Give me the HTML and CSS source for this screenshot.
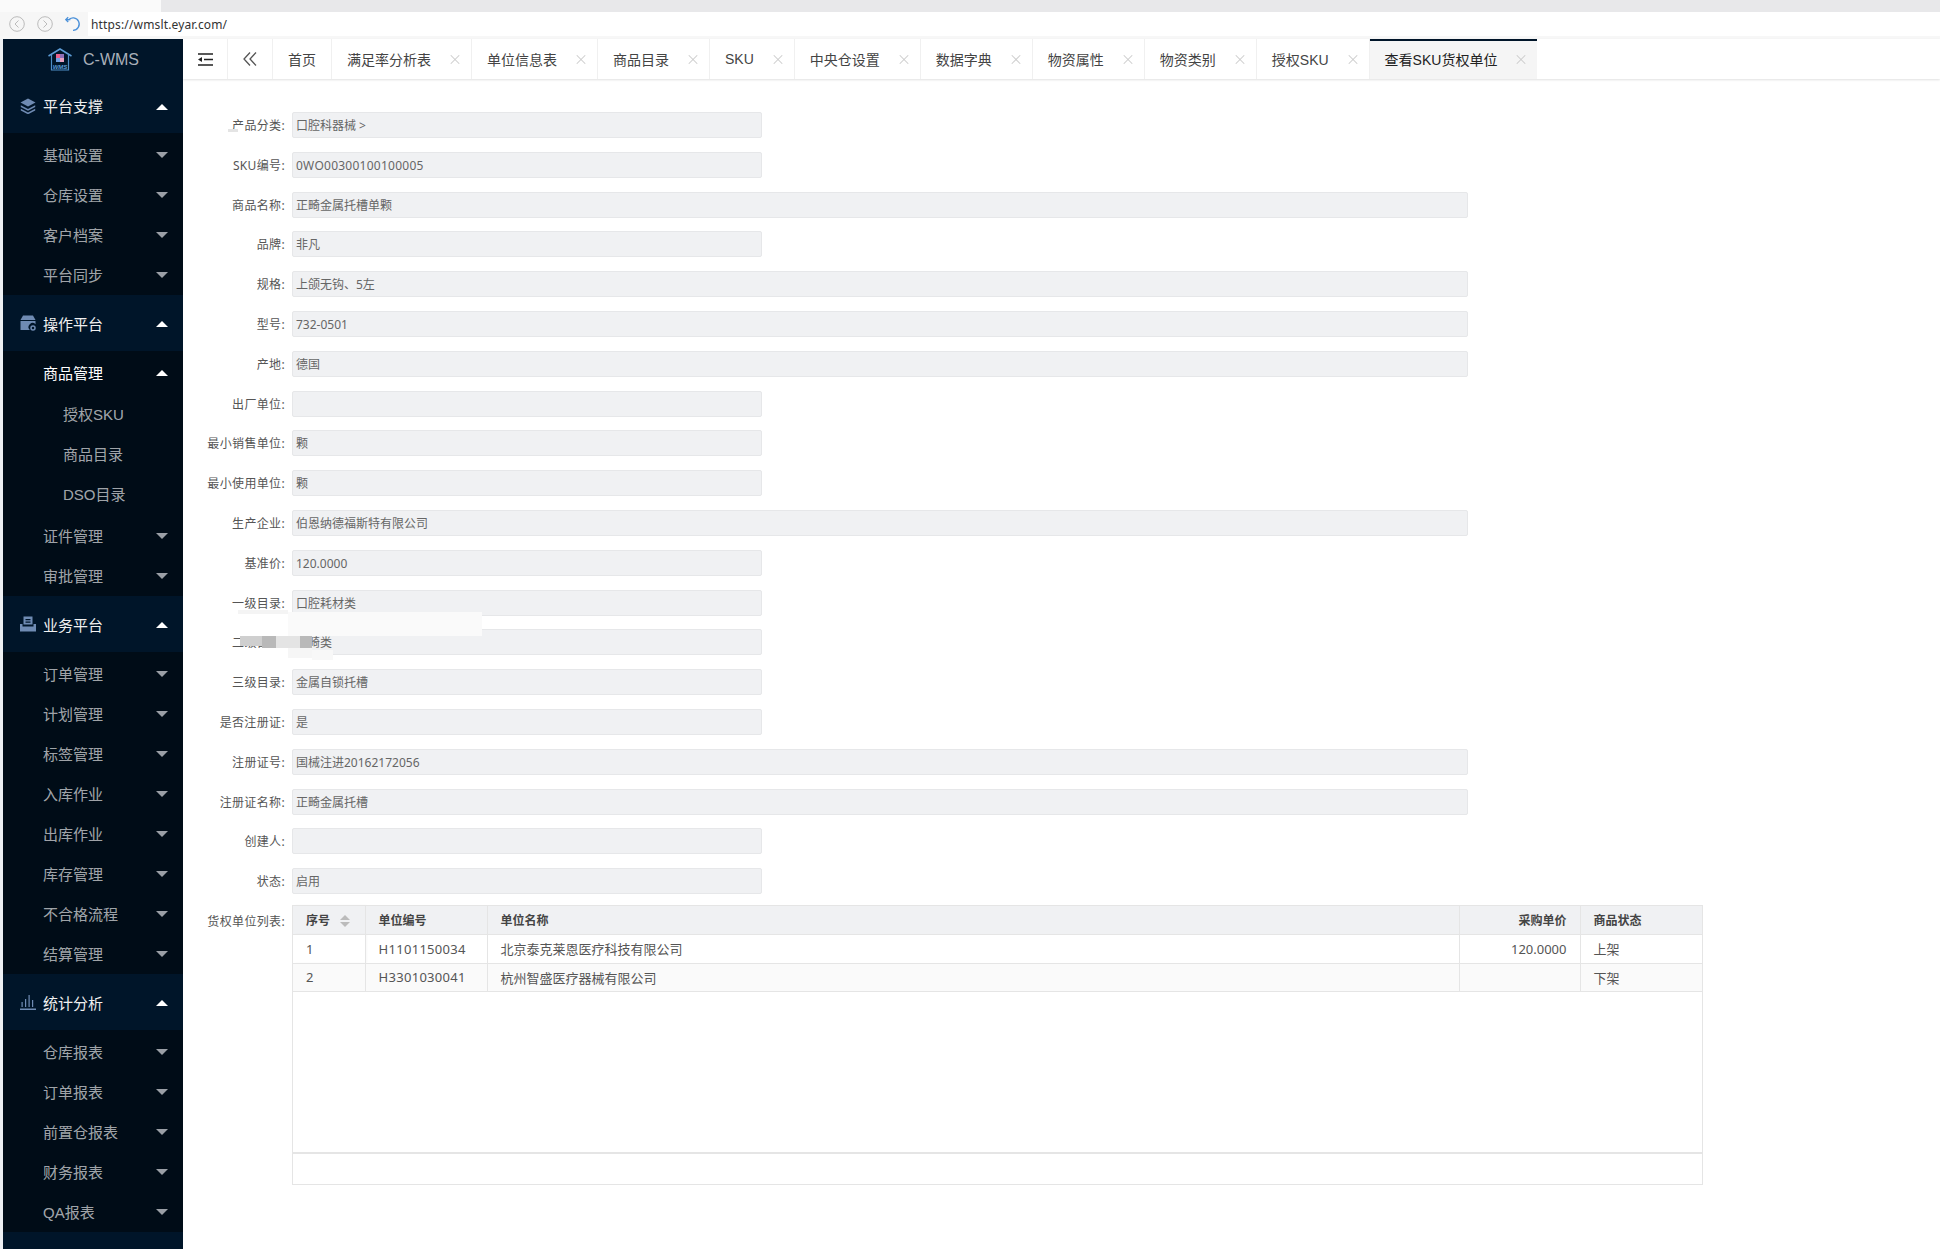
FILE: index.html
```html
<!DOCTYPE html>
<html lang="zh-CN">
<head>
    <meta charset="UTF-8">
    <meta name="viewport" content="width=device-width, initial-scale=1.0">
    <title>C-WMS</title>
    <link rel="stylesheet" href="styles.css">
</head>
<body>
    <!-- Browser chrome -->
    <div class="browser-tabs"><div class="browser-tab"></div></div>
    <div class="address-bar">
        <div class="nav-buttons">
            <svg class="nav-icon" viewBox="0 0 16 16"><circle cx="8" cy="8" r="7.3"/><path d="M9.5 4.5 6 8l3.500 3.500"/></svg>
            <svg class="nav-icon" viewBox="0 0 16 16"><circle cx="8" cy="8" r="7.300"/><path d="M6.500 4.500 10 8l-3.500 3.500"/></svg>
            <svg class="reload-icon" viewBox="0 0 16 16"><path d="M3.200 4.200A6.200 6.200 0 1 1 8 14.300"/><path d="M.8 3.600h4.600M3.200 1.200.8 3.600l2.400 2.400"/></svg>
        </div>
        <div class="url">https://wmslt.eyar.com/</div>
    </div>

    <div class="app">
        <!-- Sidebar -->
        <aside class="sidebar">
            <div class="logo">
                <svg class="logo-icon" viewBox="0 0 24 23">
                    <path class="logo-roof" d="M.5 8 12 1l11.500 7"/>
                    <path class="logo-wall" d="M3.500 7v15h17V7"/>
                    <rect x="8" y="6" width="4" height="4" fill="#e8628f"/>
                    <rect x="12" y="6" width="4" height="4" fill="#8f6fb8"/>
                    <rect x="8" y="10" width="4" height="4" fill="#6f9fe0"/>
                    <rect x="12" y="10" width="4" height="4" fill="#e8a0c0"/>
                    <text x="12" y="21" class="logo-text">WMS</text>
                </svg>
                <span>C-WMS</span>
            </div>

            <div class="group-title first">
                <svg class="group-icon" viewBox="0 0 16 16"><path d="M8 .5 15.500 4.500 8 8.500.5 4.500z"/><path d="M.8 7.200 8 11l7.200-3.800v1.800L8 12.800.8 9z"/><path d="M.8 10.700 8 14.500l7.200-3.800v1.800L8 16.300.8 12.500z"/></svg>
                <span>平台支撑</span><i class="arrow up"></i>
            </div>
            <ul class="submenu">
                <li class="menu-item"><span>基础设置</span><i class="arrow"></i></li>
                <li class="menu-item"><span>仓库设置</span><i class="arrow"></i></li>
                <li class="menu-item"><span>客户档案</span><i class="arrow"></i></li>
                <li class="menu-item"><span>平台同步</span><i class="arrow"></i></li>
            </ul>

            <div class="group-title">
                <svg class="group-icon" viewBox="0 0 16 16"><path d="M3 .5h10l2.500 4.500H.5z"/><path d="M.5 6h15v3.200A4 4 0 0 0 9.800 15H.5z"/><circle cx="13" cy="13" r="2" fill="none" stroke="#6f8bb3" stroke-width="1.500"/></svg>
                <span>操作平台</span><i class="arrow up"></i>
            </div>
            <ul class="submenu">
                <li class="menu-item open"><span>商品管理</span><i class="arrow up"></i></li>
                <li class="child-list">
                    <div class="child-item">授权SKU</div>
                    <div class="child-item">商品目录</div>
                    <div class="child-item">DSO目录</div>
                </li>
                <li class="menu-item"><span>证件管理</span><i class="arrow"></i></li>
                <li class="menu-item"><span>审批管理</span><i class="arrow"></i></li>
            </ul>

            <div class="group-title">
                <svg class="group-icon" viewBox="0 0 16 16"><path d="M3.500.5h9v8h-9zM5.500 3v1.200h5V3zm0 2.500v1.200h5V5.500z" fill-rule="evenodd"/><path d="M0 8h2.500v2.500h11V8H16v7.500H0z"/></svg>
                <span>业务平台</span><i class="arrow up"></i>
            </div>
            <ul class="submenu">
                <li class="menu-item"><span>订单管理</span><i class="arrow"></i></li>
                <li class="menu-item"><span>计划管理</span><i class="arrow"></i></li>
                <li class="menu-item"><span>标签管理</span><i class="arrow"></i></li>
                <li class="menu-item"><span>入库作业</span><i class="arrow"></i></li>
                <li class="menu-item"><span>出库作业</span><i class="arrow"></i></li>
                <li class="menu-item"><span>库存管理</span><i class="arrow"></i></li>
                <li class="menu-item"><span>不合格流程</span><i class="arrow"></i></li>
                <li class="menu-item"><span>结算管理</span><i class="arrow"></i></li>
            </ul>

            <div class="group-title">
                <svg class="group-icon" viewBox="0 0 16 16"><path d="M0 14.500h16V16H0zM1.500 8h1.200v5H1.500zM5 5h1.200v8H5zM8.500 1h1.200v12H8.500zM12 6h1.200v7H12z"/></svg>
                <span>统计分析</span><i class="arrow up"></i>
            </div>
            <ul class="submenu">
                <li class="menu-item"><span>仓库报表</span><i class="arrow"></i></li>
                <li class="menu-item"><span>订单报表</span><i class="arrow"></i></li>
                <li class="menu-item"><span>前置仓报表</span><i class="arrow"></i></li>
                <li class="menu-item"><span>财务报表</span><i class="arrow"></i></li>
                <li class="menu-item"><span>QA报表</span><i class="arrow"></i></li>
            </ul>
        </aside>

        <main class="main">
            <!-- Tab bar -->
            <nav class="tabbar">
                <div class="tool-btn toggle">
                    <svg viewBox="0 0 15 13"><path d="M0 1h15M6 6.500h9M0 12h15" stroke="#222" stroke-width="1.600" fill="none"/><path d="M0 6.500 4 4v5z" fill="#222"/></svg>
                </div>
                <div class="tool-btn collapse">
                    <svg viewBox="0 0 14 14"><path d="M7 .5 1 7l6 6.500M13 .5 7 7l6 6.500" stroke="#555" stroke-width="1.300" fill="none"/></svg>
                </div>
                <div class="tab home">首页</div>
                <div class="tab">满足率分析表<i class="tab-close"></i></div>
                <div class="tab">单位信息表<i class="tab-close"></i></div>
                <div class="tab">商品目录<i class="tab-close"></i></div>
                <div class="tab">SKU<i class="tab-close"></i></div>
                <div class="tab">中央仓设置<i class="tab-close"></i></div>
                <div class="tab">数据字典<i class="tab-close"></i></div>
                <div class="tab">物资属性<i class="tab-close"></i></div>
                <div class="tab">物资类别<i class="tab-close"></i></div>
                <div class="tab">授权SKU<i class="tab-close"></i></div>
                <div class="tab active">查看SKU货权单位<i class="tab-close"></i></div>
            </nav>

            <!-- Form -->
            <section class="content">
                <div class="form-row"><label>产品分类:</label><div class="field">口腔科器械 &gt;</div></div>
                <div class="form-row"><label>SKU编号:</label><div class="field num">0WO00300100100005</div></div>
                <div class="form-row"><label>商品名称:</label><div class="field wide">正畸金属托槽单颗</div></div>
                <div class="form-row"><label>品牌:</label><div class="field">非凡</div></div>
                <div class="form-row"><label>规格:</label><div class="field wide">上颌无钩、5左</div></div>
                <div class="form-row"><label>型号:</label><div class="field wide">732-0501</div></div>
                <div class="form-row"><label>产地:</label><div class="field wide">德国</div></div>
                <div class="form-row"><label>出厂单位:</label><div class="field"></div></div>
                <div class="form-row"><label>最小销售单位:</label><div class="field">颗</div></div>
                <div class="form-row"><label>最小使用单位:</label><div class="field">颗</div></div>
                <div class="form-row"><label>生产企业:</label><div class="field wide">伯恩纳德福斯特有限公司</div></div>
                <div class="form-row"><label>基准价:</label><div class="field">120.0000</div></div>
                <div class="form-row"><label>一级目录:</label><div class="field">口腔耗材类</div></div>
                <div class="form-row"><label>二级目录:</label><div class="field">正畸类</div></div>
                <div class="form-row"><label>三级目录:</label><div class="field">金属自锁托槽</div></div>
                <div class="form-row"><label>是否注册证:</label><div class="field">是</div></div>
                <div class="form-row"><label>注册证号:</label><div class="field wide">国械注进20162172056</div></div>
                <div class="form-row"><label>注册证名称:</label><div class="field wide">正畸金属托槽</div></div>
                <div class="form-row"><label>创建人:</label><div class="field"></div></div>
                <div class="form-row"><label>状态:</label><div class="field">启用</div></div>

                <div class="table-row">
                    <label>货权单位列表:</label>
                    <div class="data-grid">
                        <table class="units">
                            <colgroup>
                                <col class="col-no"><col class="col-code"><col><col class="col-price"><col class="col-status">
                            </colgroup>
                            <thead>
                                <tr>
                                    <th class="first-col">序号<i class="sort"></i></th>
                                    <th>单位编号</th>
                                    <th>单位名称</th>
                                    <th class="right">采购单价</th>
                                    <th>商品状态</th>
                                </tr>
                            </thead>
                            <tbody>
                                <tr>
                                    <td class="first-col">1</td>
                                    <td class="num">H1101150034</td>
                                    <td>北京泰克莱恩医疗科技有限公司</td>
                                    <td class="right">120.0000</td>
                                    <td>上架</td>
                                </tr>
                                <tr class="alt">
                                    <td class="first-col">2</td>
                                    <td class="num">H3301030041</td>
                                    <td>杭州智盛医疗器械有限公司</td>
                                    <td class="right"></td>
                                    <td>下架</td>
                                </tr>
                            </tbody>
                        </table>
                        <div class="grid-empty"></div>
                        <div class="grid-footer"></div>
                    </div>
                </div>

                <!-- Mosaic over the second-level row -->
                <div class="smudge patch-a"></div>
                <div class="smudge patch-b"></div>
                <div class="smudge patch-c"></div>
                <div class="smudge patch-e"></div>
                <div class="smudge block-a"></div>
                <div class="smudge block-b"></div>
                <div class="smudge block-c"></div>
                <div class="smudge block-d"></div>
                <div class="smudge patch-d"></div>
            </section>
        </main>
    </div>
</body>
</html>
```

FILE: styles.css
```css
* {
    box-sizing: border-box;
}

html, body {
    height: 1249px;
}

body {
    margin: 0;
    padding: 0;
    overflow: hidden;
    background-color: #fff;
    font-family: "Noto Sans", "Noto Sans CJK SC", sans-serif;
    font-size: 12px;
    color: #555;
}

ul {
    margin: 0;
    padding: 0;
    list-style: none;
}

i {
    display: block;
}

/* Browser chrome */
.browser-tabs {
    height: 12px;
    background-color: #e8e8ea;
}

.browser-tab {
    width: 161px;
    height: 12px;
    background-color: #fafafa;
}

.address-bar {
    display: flex;
    align-items: center;
    height: 24px;
    background-color: #fff;
}

.nav-buttons {
    display: flex;
    align-items: center;
    gap: 12px;
    width: 88px;
    height: 24px;
    padding-left: 9px;
    background-color: #f6f6f6;
}

.nav-icon {
    width: 16px;
    height: 16px;
    fill: none;
    stroke: #bbb;
    stroke-width: 1;
}

.reload-icon {
    width: 16px;
    height: 16px;
    margin-left: 0;
    fill: none;
    stroke: #4a90d9;
    stroke-width: 1.300;
}

.url {
    padding-left: 3px;
    font-size: 12px;
    color: #333;
    letter-spacing: 0.15px;
}

/* Layout */
.app {
    display: flex;
    height: 1213px;
    padding-left: 3px;
    padding-top: 3px;
    background: linear-gradient(#f7f7f7 3px, transparent 3px), linear-gradient(90deg, #eef0f3 3px, #fff 3px);
}

/* Sidebar */
.sidebar {
    flex: 0 0 180px;
    width: 180px;
    background-color: #001529;
    font-family: "Liberation Sans", "Noto Sans CJK SC", sans-serif;
    font-size: 15px;
    color: rgba(255, 255, 255, 0.65);
}

.logo {
    display: flex;
    align-items: center;
    height: 39px;
    padding-left: 45px;
    padding-top: 2px;
    font-size: 16px;
    color: #a9b0b9;
}

.logo span {
    margin-left: 11px;
}

.logo-icon {
    width: 24px;
    height: 23px;
    fill: none;
}

.logo-roof {
    stroke: #5b9bd5;
    stroke-width: 1.500;
}

.logo-wall {
    stroke: #4f8fc7;
    stroke-width: 1.200;
}

.logo-text {
    font-family: "Liberation Sans", sans-serif;
    font-size: 6px;
    font-style: italic;
    font-weight: bold;
    fill: #5b9bd5;
    text-anchor: middle;
}

.group-title {
    display: flex;
    align-items: center;
    height: 56px;
    padding: 0 15px 0 17px;
    color: #f0f0f0;
}

.group-title.first {
    height: 55px;
}

.group-title span {
    flex: 1;
    margin-left: 7px;
}

.group-icon {
    width: 16px;
    height: 16px;
    fill: #6f8bb3;
}

.arrow {
    width: 0;
    height: 0;
    margin-top: 2px;
    border-left: 6px solid transparent;
    border-right: 6px solid transparent;
    border-top: 6px solid #9a9fa6;
}

.arrow.up {
    border-top: 0;
    border-bottom: 6px solid #fff;
}

.submenu {
    padding: 1px 0;
    background-color: #000c17;
}

.menu-item {
    display: flex;
    align-items: center;
    justify-content: space-between;
    height: 40px;
    padding: 0 15px 0 40px;
}

.menu-item.open {
    color: #fff;
}

.child-list {
    padding: 1px 0 2px;
}

.child-item {
    display: flex;
    align-items: center;
    height: 40px;
    padding-left: 60px;
}

/* Tab bar */
.main {
    flex: 1;
    min-width: 0;
}

.tabbar {
    display: flex;
    height: 40px;
    background-color: #fff;
    box-shadow: 0 1px 2px rgba(0, 0, 0, 0.12);
    font-family: "Liberation Sans", "Noto Sans CJK SC", sans-serif;
    font-size: 14px;
    color: #444;
}

.tool-btn {
    display: flex;
    align-items: center;
    justify-content: center;
    border-right: 1px solid #f0f0f0;
}

.toggle {
    width: 45px;
}

.toggle svg {
    width: 15px;
    height: 13px;
}

.collapse {
    width: 45px;
}

.collapse svg {
    width: 14px;
    height: 14px;
}

.tab {
    display: flex;
    align-items: center;
    padding: 0 11px 0 15px;
    border-right: 1px solid #f0f0f0;
}

.tab.home {
    padding-right: 15px;
}

.tab.active {
    border-top: 2px solid #001529;
    border-right: 0;
    padding: 0 11px 2px 15px;
    background-color: #f5f5f5;
    color: #222;
}

.tab-close {
    position: relative;
    width: 10px;
    height: 10px;
    margin-left: 19px;
}

.tab-close::before, .tab-close::after {
    content: "";
    position: absolute;
    top: 4.500px;
    left: -1px;
    width: 12px;
    height: 1px;
    background-color: #ccc;
    transform: rotate(45deg);
}

.tab-close::after {
    transform: rotate(-45deg);
}

/* Form */
.content {
    padding-top: 33px;
}

.form-row {
    display: flex;
    align-items: center;
    height: 26px;
    margin-bottom: 13.800px;
}

.form-row label, .table-row label {
    flex: 0 0 103px;
    padding-right: 1px;
    text-align: right;
    letter-spacing: 0.35px;
    white-space: nowrap;
}

.field {
    width: 470px;
    height: 26px;
    margin-left: 6px;
    padding-left: 3px;
    border: 1px solid #e6e7e9;
    border-radius: 2px;
    background-color: #f0f1f3;
    line-height: 25px;
    color: #666;
}

.field.wide {
    width: 1176px;
}

.field.num {
    letter-spacing: 0.25px;
}

/* Table */
.table-row {
    display: flex;
    margin-top: -3px;
}

.table-row label {
    padding-top: 7px;
}

.data-grid {
    width: 1411px;
    height: 280px;
    margin-left: 6px;
    border: 1px solid #e5e5e5;
    border-top: 0;
}

.units {
    width: 100%;
    table-layout: fixed;
    border-collapse: collapse;
    font-size: 13px;
    color: #555;
}

.col-no {
    width: 72px;
}

.col-code {
    width: 122px;
}

.col-price {
    width: 121px;
}

.col-status {
    width: 122px;
}

.units th, .units td {
    height: 29px;
    padding: 0 13px;
    border: 1px solid #e5e5e5;
    text-align: left;
    white-space: nowrap;
}

.units th:first-child, .units td:first-child {
    border-left: 0;
}

.units th:last-child, .units td:last-child {
    border-right: 0;
}

.units th {
    background-color: #f0f1f3;
    font-size: 12px;
    font-weight: bold;
    color: #444;
}

.units .right {
    text-align: right;
}

.units .first-col {
    box-shadow: 2px 0 2px rgba(0, 0, 0, 0.03);
}

.units td.num {
    letter-spacing: 0.3px;
}

.units .alt td {
    height: 28px;
    background-color: #fafafa;
}

.sort {
    display: inline-block;
    position: relative;
    width: 10px;
    height: 12px;
    margin-left: 10px;
    vertical-align: -2px;
}

.sort::before, .sort::after {
    content: "";
    position: absolute;
    left: 0;
    border-left: 5px solid transparent;
    border-right: 5px solid transparent;
}

.sort::before {
    top: 0;
    border-bottom: 5px solid #bbb;
}

.sort::after {
    bottom: 0;
    border-top: 5px solid #bbb;
}

.grid-empty {
    height: 162px;
    border-bottom: 2px solid #e5e5e5;
}

.grid-footer {
    height: 30px;
}

/* Mosaic smudges, measured from the page top */
.smudge {
    position: absolute;
}

.patch-a {
    left: 288px;
    top: 612px;
    width: 194px;
    height: 24px;
    background-color: #fafafa;
}

.patch-b {
    left: 288px;
    top: 636px;
    width: 24px;
    height: 22px;
    background-color: #f6f6f6;
}

.patch-c {
    left: 238px;
    top: 610px;
    width: 50px;
    height: 4px;
    background-color: #f4f4f4;
}

.patch-e {
    left: 312px;
    top: 650px;
    width: 21px;
    height: 10px;
    background-color: #f8f8f8;
}

.block-a {
    left: 240px;
    top: 636px;
    width: 22px;
    height: 10px;
    background-color: #cfcfcf;
}

.block-b {
    left: 262px;
    top: 636px;
    width: 14px;
    height: 12px;
    background-color: #b9b9b9;
}

.block-c {
    left: 276px;
    top: 636px;
    width: 24px;
    height: 12px;
    background-color: #e4e4e4;
}

.block-d {
    left: 300px;
    top: 636px;
    width: 12px;
    height: 12px;
    background-color: #b9b9b9;
}

.patch-d {
    left: 228px;
    top: 129px;
    width: 10px;
    height: 3px;
    background-color: #e4e4e4;
}
```
